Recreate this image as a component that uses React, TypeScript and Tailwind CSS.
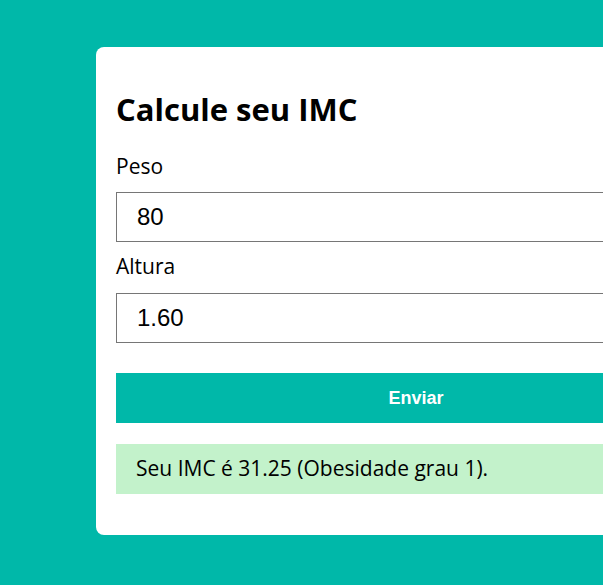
export default function App() {
  return (
    <div className="h-[585px] w-full overflow-hidden bg-[#00b8a9] font-['Open_Sans',sans-serif]">
      <div className="ml-[96px] mt-[47px] w-[640px] rounded-lg bg-white px-5 pb-[41px] pt-10">
        <h1 className="text-[31px] font-bold leading-[44px] text-black">Calcule seu IMC</h1>
        <label className="mt-[21px] block text-[21px] leading-[28px] text-black">Peso</label>
        <input
          defaultValue="80"
          className="mt-[12px] block h-[50px] w-full border border-[#767676] px-5 font-['Liberation_Sans',sans-serif] text-[24px] text-black outline-none"
        />
        <label className="mt-[10px] block text-[21px] leading-[28px] text-black">Altura</label>
        <input
          defaultValue="1.60"
          className="mt-[13px] block h-[50px] w-full border border-[#767676] px-5 font-['Liberation_Sans',sans-serif] text-[24px] text-black outline-none"
        />
        <button className="mt-[30px] block h-[50px] w-full bg-[#00b8a9] font-['Liberation_Sans',sans-serif] text-[18px] font-bold text-white">
          Enviar
        </button>
        <div className="mt-[21px] flex h-[50px] items-center bg-[#c3f2cb] px-5 text-[21px] text-black">
          Seu IMC é 31.25 (Obesidade grau 1).
        </div>
      </div>
    </div>
  );
}
